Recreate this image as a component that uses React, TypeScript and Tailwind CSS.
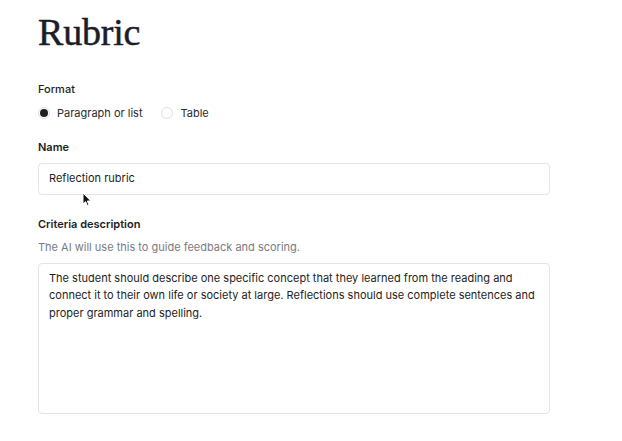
import React from 'react';

const sans = { fontFamily: 'Inter, "Noto Sans", sans-serif' };

const Cursor = () => (
  <svg
    className="absolute left-[82px] top-[192px]"
    width="10"
    height="15"
    viewBox="0 0 10 15"
  >
    <path d="M1 1 L1 12 L3.6 9.6 L5.4 13.8 L7 13.1 L5.3 9 L8.8 9 Z" fill="#111" stroke="#fff" strokeWidth="1" />
  </svg>
);

const Radio = ({ checked, label }: { checked?: boolean; label: string }) => (
  <label className="flex items-center gap-[7px]">
    <span className="w-[12px] h-[12px] rounded-full flex items-center justify-center border border-[#dedee2] bg-white">
      {checked && <span className="w-[8px] h-[8px] rounded-full bg-[#1f1f24]" />}
    </span>
    <span className="text-[11px] text-[#2a2a30]">{label}</span>
  </label>
);

const App: React.FC = () => {
  return (
    <div className="relative min-h-screen bg-white text-[#1d1d22]" style={sans}>
      <div className="pl-[38px] pt-[10px] w-[550px]">
        <h1
          className="text-[38px] leading-[44px] text-[#1c1d2a] tracking-[-0.2px]"
          style={{ fontFamily: '"Liberation Serif", "DejaVu Serif", serif', WebkitTextStroke: '0.5px #1c1d2a' }}
        >
          Rubric
        </h1>

        <div className="mt-[27px] text-[11px] font-medium text-[#1d1d22]">Format</div>
        <div className="mt-[7px] flex items-center gap-[19px]">
          <Radio checked label="Paragraph or list" />
          <Radio label="Table" />
        </div>

        <div className="mt-[18px] text-[11px] font-semibold text-[#1d1d22]">Name</div>
        <div className="mt-[7px] h-[32px] border border-[#e4e4e7] rounded-[4px] flex items-center px-[10px] text-[11px] text-[#1d1d22]">
          Reflection rubric
        </div>

        <div className="mt-[21px] text-[11px] font-semibold text-[#1d1d22]">Criteria description</div>
        <div className="mt-[7px] text-[11px] text-[#7b7b82]">
          The AI will use this to guide feedback and scoring.
        </div>
        <div className="mt-[7px] h-[151px] border border-[#e4e4e7] rounded-[4px] px-[10px] pt-[6px] text-[11px] leading-[17.5px] text-[#1d1d22]">
          The student should describe one specific concept that they learned from the reading and
          connect it to their own life or society at large. Reflections should use complete sentences and
          proper grammar and spelling.
        </div>
      </div>
      <Cursor />
    </div>
  );
};

export default App;
